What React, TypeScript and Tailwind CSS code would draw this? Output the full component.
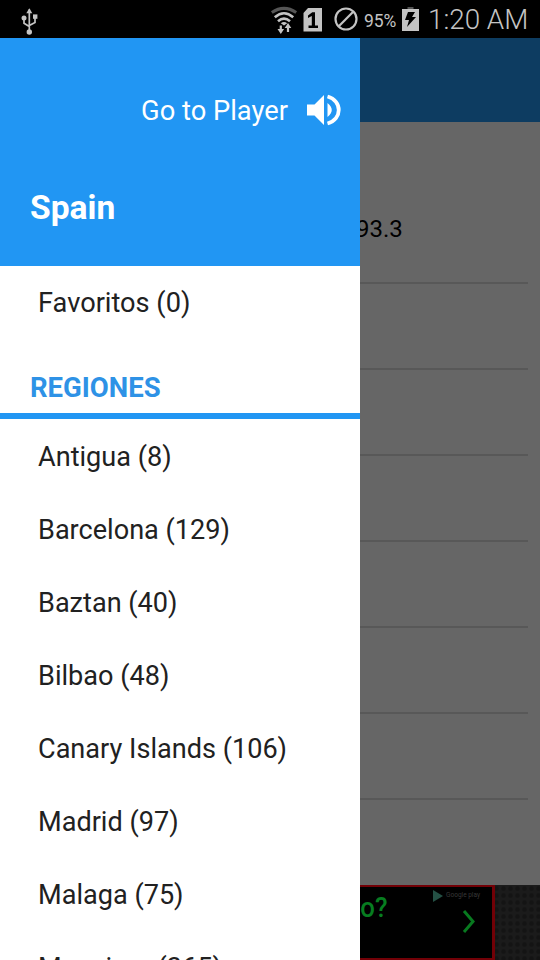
import React from "react";

const regions = [
  "Antigua (8)",
  "Barcelona (129)",
  "Baztan (40)",
  "Bilbao (48)",
  "Canary Islands (106)",
  "Madrid (97)",
  "Malaga (75)",
  "Mancisor (365)",
];

function StatusBar() {
  return (
    <header className="flex h-[38px] shrink-0 items-center bg-black pr-3 pl-5 text-[#c4c4c4]">
      <svg width="19" height="30" viewBox="0 0 19 30" fill="#c4c4c4" stroke="#c4c4c4" className="mt-px">
        <path d="M9.3 4.5V26M4 14v4.2L9.3 21.5M15 13v4.5L9.3 20.5" fill="none" strokeWidth="1.7" />
        <path d="M9.3 3.2 6.3 8.3h6z" stroke="none" />
        <circle cx="4" cy="13" r="2.5" stroke="none" />
        <path d="M13 9.4h4.400v4.400h-4.400z" stroke="none" />
        <circle cx="9.3" cy="27" r="2.7" stroke="none" />
      </svg>
      <svg width="28" height="30" viewBox="0 0 28 30" fill="none" stroke="#c4c4c4" className="mt-px ml-auto">
        <path d="M1.8 7.6Q14 -.8 26.2 7.6" stroke="#555" strokeWidth="3" />
        <path d="M4.8 12.3Q14 4.2 23.2 12.3M8 16.3Q14 11 20 16.3" strokeWidth="2.6" />
        <path d="M10.8 18.3Q14 15.5 17.2 18.3L14 20.500z" fill="#c4c4c4" stroke="none" />
        <path d="M10.8 20.500v5M18 27v-5" strokeWidth="2.2" />
        <path d="M7.5 24h6.600L10.800 29zM14.700 23l3.300-5 3.300 5z" fill="#c4c4c4" stroke="none" />
      </svg>
      <svg width="20" height="24" viewBox="0 0 20 24" className="mt-px ml-[5px]">
        <path d="M5 0H19v23.5H0.500V5z" fill="#c4c4c4" />
        <path d="M5 7.5 9.3 4.2H12V17.5H15V20H5.500V17.5H8.8V8L5 10z" fill="#000" />
      </svg>
      <svg width="24" height="24" viewBox="0 0 24 24" fill="none" stroke="#c4c4c4" strokeWidth="2.2" className="ml-[11px]">
        <circle cx="12" cy="12" r="10.5" />
        <path d="M4.8 19.2 19.2 4.8" />
      </svg>
      <span className="mt-[3px] ml-[6px] w-[33px] text-[17.5px] leading-5 tracking-[-0.1px] whitespace-nowrap">95%</span>
      <svg width="17" height="24" viewBox="0 0 17 24" className="ml-[5px]">
        <path d="M5.5 0h6v2h-6z" fill="#555" />
        <path d="M0 2h17v22H0z" fill="#c4c4c4" />
        <path d="M6 5h7l-3 5h4L5 20l2-7H3z" fill="#000" />
      </svg>
      <span className="mt-[2px] ml-[9px] w-[100px] text-[27.8px] leading-8 font-light whitespace-nowrap">1:20 AM</span>
    </header>
  );
}

function Drawer() {
  return (
    <aside className="h-full w-[360px] shrink-0 overflow-hidden bg-white text-[#212121]">
      <div className="flex h-[228px] flex-col bg-[#2196f3] text-white">
        <button className="mt-[54px] mr-[18px] flex h-9 items-center justify-end">
          <span className="mt-[2px] text-[27.3px] leading-9">Go to Player</span>
          <svg width="35" height="34" viewBox="0 0 35 34" fill="white" className="ml-[19px]">
            <path d="M0 11.500h7.5L17 2v30L7.5 22.500H0zM20.5 10q8.5 7 0 14z" />
            <path d="M20.5 3.5c15 4 15 23 0 27" fill="none" stroke="white" strokeWidth="3.8" />
          </svg>
        </button>
        <h1 className="mt-[62px] ml-[30px] text-[33.6px] leading-9 font-bold">Spain</h1>
      </div>
      <div className="flex h-[73px] items-center pt-[2px] pl-[38px] text-[27.2px]">Favoritos (0)</div>
      <h2 className="flex h-[80px] items-end border-b-6 border-[#2196f3] pb-[7px] pl-[30px] text-[27.5px] leading-9 font-bold text-[#2e92e6]">
        REGIONES
      </h2>
      <ul>
        {regions.map((region) => (
          <li key={region} className="flex h-[73px] items-center pt-[4px] pl-[38px] text-[27.1px] whitespace-nowrap">
            {region}
          </li>
        ))}
      </ul>
    </aside>
  );
}

function AdBanner() {
  return (
    <div className="flex h-[76px] bg-[#1b1b1b] bg-[radial-gradient(#141414_1.5px,transparent_3px)] bg-size-[7px_7px]">
      <div className="flex w-[135px] justify-between border-y-2 border-r-3 border-[#720006] bg-black">
        <span className="mt-[3px] -ml-[8px] origin-left scale-x-92 text-[28px] leading-9 font-medium text-[#077d20]">to?</span>
        <div className="mr-[12px] flex flex-col items-end">
          <div className="mt-[3px] flex h-3 items-center gap-[3px] text-[6.5px] text-[#383838]">
            <svg width="10" height="12" viewBox="0 0 10 12"><path d="M0 0v12l10-6z" fill="#245044" /></svg>
            <span>Google play</span>
          </div>
          <svg width="14" height="24" viewBox="0 0 14 24" className="mt-[8px] mr-[4px]" fill="none" stroke="#08791f" strokeWidth="3">
            <path d="m2 1 9 10.5L2 22" />
          </svg>
        </div>
      </div>
    </div>
  );
}

function Backdrop() {
  return (
    <main className="flex min-w-0 flex-1 flex-col overflow-hidden bg-[#666]">
      <div className="h-[84px] shrink-0 bg-[#0d3c61]" />
      <div className="mr-3 flex h-[162px] shrink-0 flex-col border-b-2 border-[#585858] text-black">
        <span className="mt-[91px] -ml-[4px] text-[24px] leading-8">93.3</span>
      </div>
      {[0, 1, 2, 3, 4, 5].map((row) => (
        <div key={row} className="mr-3 h-[86px] shrink-0 border-b-2 border-[#585858]" />
      ))}
      <div className="h-[85px] shrink-0" />
      <AdBanner />
    </main>
  );
}

export default function App() {
  return (
    <div className="flex h-[960px] w-[540px] flex-col overflow-hidden font-['Roboto',sans-serif]">
      <StatusBar />
      <div className="flex h-[922px]">
        <Drawer />
        <Backdrop />
      </div>
    </div>
  );
}
